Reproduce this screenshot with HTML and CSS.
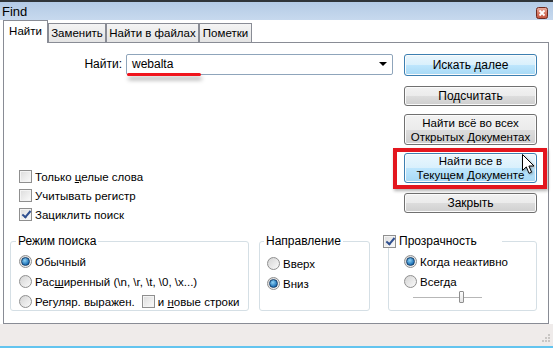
FILE: index.html
```html
<!DOCTYPE html>
<html lang="ru">

<head>
    <meta charset="UTF-8">
    <title>Find</title>
    <link rel="stylesheet" href="styles.css">
</head>

<body>

    <div class="window">
        <div class="titlebar">
            <span class="title">Find</span>
            <svg class="close" width="12" height="12" viewBox="0 0 12 12">
                <defs>
                    <linearGradient id="closeFill" x1="0" y1="0" x2="0" y2="1">
                        <stop offset="0" stop-color="#eab0a4"/>
                        <stop offset="0.5" stop-color="#d77a66"/>
                        <stop offset="1" stop-color="#c2503c"/>
                    </linearGradient>
                </defs>
                <rect x="0.5" y="0.5" width="11" height="11" rx="2" fill="url(#closeFill)" stroke="#6e2a20"/>
                <path d="M3.5 3.5 L8.5 8.5 M8.5 3.5 L3.5 8.5" stroke="#fff" stroke-width="1.8"/>
            </svg>
        </div>

        <div class="tabs">
            <div class="tab active">Найти</div>
            <div class="tab tab-replace">Заменить</div>
            <div class="tab tab-files">Найти в файлах</div>
            <div class="tab tab-marks">Пометки</div>
        </div>

        <div class="panel">
            <div class="top">
                <div class="left">
                    <div class="find-row">
                        <label class="find-label">Найти:</label>
                        <div class="combo">
                            <span class="combo-value">webalta</span>
                            <span class="combo-arrow"></span>
                            <span class="mark-line"></span>
                        </div>
                    </div>

                    <div class="checks">
                        <div class="check"><span class="box"></span><span>Только <u>ц</u>елые слова</span></div>
                        <div class="check"><span class="box"></span><span>Учитывать регистр</span></div>
                        <div class="check"><span class="box checked"></span><span>Зациклить поиск</span></div>
                    </div>
                </div>

                <div class="buttons">
                    <div class="btn blue btn-next">Искать далее</div>
                    <div class="btn btn-count"><span>По<u>д</u>считать</span></div>
                    <div class="btn tall btn-all-docs"><span>Найти всё во всех<br>Открытых Документах</span></div>
                    <div class="btn-wrap">
                        <div class="btn blue tall"><span>Найти все в<br>Текущем Документе</span></div>
                        <span class="mark-frame"></span>
                        <svg class="cursor" width="14" height="22" viewBox="0 0 14 22">
                            <path d="M0.5 0.5 L0.5 16.5 L4.3 12.9 L7 19.3 L9.6 18.2 L6.9 12 L12 12 Z" fill="#fff" stroke="#000" stroke-width="1" stroke-linejoin="round"/>
                        </svg>
                    </div>
                    <div class="btn btn-close">Закрыть</div>
                </div>
            </div>

            <div class="groups">
                <fieldset class="group group-mode">
                    <legend>Режим поиска</legend>
                    <div class="radio-row first"><span class="radio on"></span><span>Обычный</span></div>
                    <div class="radio-row"><span class="radio"></span><span>Рас<u>ш</u>иренный (\n, \r, \t, \0, \x...)</span></div>
                    <div class="radio-row">
                        <span class="radio"></span><span>Регуляр. выражен.</span>
                        <span class="box inline-box"></span><span>и <u>н</u>овые строки</span>
                    </div>
                </fieldset>

                <fieldset class="group group-dir">
                    <legend>Направление</legend>
                    <div class="radio-row first"><span class="radio"></span><span>Вверх</span></div>
                    <div class="radio-row"><span class="radio on"></span><span>Вниз</span></div>
                </fieldset>

                <fieldset class="group group-trans">
                    <legend><span class="box checked"></span><span>Прозрачность</span></legend>
                    <div class="radio-row first"><span class="radio on"></span><span>Когда неактивно</span></div>
                    <div class="radio-row"><span class="radio"></span><span>Всегда</span></div>
                    <div class="slider"><span class="thumb"></span></div>
                </fieldset>
            </div>
        </div>

        <div class="footer">
            <svg class="grip" width="11" height="11" viewBox="0 0 11 11">
                <g fill="#c9c6c4">
                    <rect x="8" y="0" width="2" height="2"/>
                    <rect x="5" y="3" width="2" height="2"/>
                    <rect x="8" y="3" width="2" height="2"/>
                    <rect x="2" y="6" width="2" height="2"/>
                    <rect x="5" y="6" width="2" height="2"/>
                    <rect x="8" y="6" width="2" height="2"/>
                </g>
            </svg>
        </div>
    </div>

</body>

</html>
```

FILE: styles.css
```css
* {
    box-sizing: border-box;
}

body {
    margin: 0;
    font-family: "Liberation Sans", Arial, sans-serif;
    font-size: 11.5px;
    color: #000;
    background-color: #ffffff;
}

.window {
    width: 553px;
    height: 348px;
    display: flex;
    flex-direction: column;
    background-color: #ffffff;
    overflow: hidden;
}

/* title bar */

.titlebar {
    height: 20px;
    border-top: 2px solid #30353a;
    background: linear-gradient(#b4cbe6, #c7d9ee);
    display: flex;
    align-items: center;
    justify-content: space-between;
    padding: 0 5px 0 2px;
}

.title {
    font-size: 13px;
}

.close {
    margin-top: 4px;
}

/* tabs */

.tabs {
    height: 22px;
    display: flex;
    align-items: flex-end;
    padding-left: 3px;
    font-size: 11.5px;
}

.tab {
    height: 19px;
    border: 1px solid #898c95;
    border-bottom: none;
    background: linear-gradient(#f4f4f4, #e4e4e4);
    display: flex;
    align-items: center;
    justify-content: center;
}

.tab.active {
    width: 45px;
    height: 23px;
    margin-bottom: -1px;
    background: #ffffff;
    position: relative;
    z-index: 1;
    padding-bottom: 2px;
}

.tab-replace {
    width: 58px;
}

.tab-files {
    width: 93px;
}

.tab-marks {
    width: 53px;
}

/* panel */

.panel {
    height: 282px;
    margin: 0 4px 0 3px;
    border: 1px solid #898c95;
    background-color: #ffffff;
}

.top {
    height: 191px;
    display: flex;
}

.left {
    width: 390px;
    padding-top: 10px;
}

.find-row {
    display: flex;
    align-items: center;
    height: 22px;
}

.find-label {
    width: 118px;
    margin-right: 4px;
    text-align: right;
    font-size: 12px;
}

.combo {
    position: relative;
    width: 267px;
    height: 21px;
    border: 1px solid #8fa5bb;
    border-radius: 2px;
    display: flex;
    align-items: center;
    justify-content: space-between;
    padding: 0 5px 0 5px;
}

.combo-value {
    font-size: 12px;
}

.combo-arrow {
    width: 0;
    height: 0;
    border-left: 4px solid transparent;
    border-right: 4px solid transparent;
    border-top: 4px solid #000;
}

.mark-line {
    position: absolute;
    left: 0;
    top: 18px;
    width: 74px;
    height: 3px;
    border-radius: 2px;
    background-color: #f0141c;
    box-shadow: 1px 4px 4px rgba(0, 0, 0, 0.35);
}

.checks {
    margin-top: 95px;
    padding-left: 15px;
}

.check {
    display: flex;
    align-items: center;
    height: 13px;
    margin-bottom: 6px;
}

/* checkbox */

.box {
    width: 13px;
    height: 13px;
    border: 1px solid #8f8f8f;
    background: linear-gradient(135deg, #dcdcdc, #fbfbfb);
    box-shadow: inset 0 0 0 1px #f4f4f4;
    margin-right: 3px;
    flex-shrink: 0;
    position: relative;
}

.box.checked::after {
    content: "";
    position: absolute;
    left: 4px;
    top: 0px;
    width: 3px;
    height: 7px;
    border-right: 2px solid #2f4f8f;
    border-bottom: 2px solid #2f4f8f;
    transform: rotate(40deg);
}

/* buttons */

.buttons {
    width: 133px;
    margin-left: 10px;
    padding-top: 11px;
    display: flex;
    flex-direction: column;
}

.btn {
    height: 21px;
    border: 1px solid #707070;
    border-radius: 3px;
    background: linear-gradient(#f2f2f2 0%, #ebebeb 50%, #dddddd 50%, #cfcfcf 100%);
    box-shadow: inset 0 0 0 1px #fbfbfb;
    display: flex;
    align-items: center;
    justify-content: center;
    text-align: center;
    line-height: 14px;
    font-size: 12px;
}

.btn.blue {
    border-color: #3c7fb1;
    background: linear-gradient(#eaf6fd 0%, #d9f0fc 50%, #bee6fd 50%, #a7d9f5 100%);
}

.btn.tall {
    height: 31px;
    font-size: 11.5px;
}

.btn-next {
    height: 22px;
}

.btn-count {
    margin-top: 10px;
    height: 20px;
}

.btn-all-docs {
    margin-top: 8px;
}

.btn-wrap {
    position: relative;
    margin-top: 8px;
}

.btn-wrap .btn {
    height: 30px;
}

.mark-frame {
    position: absolute;
    left: -11px;
    right: -10px;
    top: -5px;
    bottom: -6px;
    border: 4px solid #e3161e;
    box-shadow: 1px 2px 3px rgba(0, 0, 0, 0.3);
}

.cursor {
    position: absolute;
    left: 118px;
    top: 1px;
    filter: drop-shadow(1px 1px 1px rgba(0, 0, 0, 0.3));
}

.btn-close {
    margin-top: 10px;
    height: 20px;
}

/* group boxes */

.groups {
    display: flex;
    padding-left: 6px;
}

.group {
    margin: 0;
    height: 77px;
    border: 1px solid #d5dfe5;
    border-radius: 3px;
    padding: 0;
}

.group legend {
    line-height: 14px;
    padding: 0 2px;
    margin-left: -3px;
    font-size: 12px;
}

.group-mode {
    width: 239px;
    padding-left: 8px;
}

.group-dir {
    width: 111px;
    margin-left: 10px;
    padding-left: 7px;
}

.group-trans {
    width: 149px;
    margin-left: 18px;
    padding-left: 15px;
}

.group-trans legend {
    width: 119px;
    margin-left: -21px;
    padding: 0;
    display: flex;
    align-items: center;
}

.radio-row {
    display: flex;
    align-items: center;
    height: 13px;
    margin-top: 7px;
    white-space: nowrap;
}

.radio-row.first {
    margin-top: 7px;
}

.group-dir .radio-row.first {
    margin-top: 9px;
}

.radio {
    width: 13px;
    height: 13px;
    border-radius: 50%;
    border: 1px solid #8f8f8f;
    background: linear-gradient(135deg, #d4d4d4, #fafafa);
    margin-right: 3px;
    flex-shrink: 0;
    display: flex;
    align-items: center;
    justify-content: center;
}

.radio.on::after {
    content: "";
    width: 7px;
    height: 7px;
    border-radius: 50%;
    background: radial-gradient(circle at 40% 35%, #8fd3f6, #1b6fb5 70%, #0e4a83);
    border: 1px solid #17406b;
}

.inline-box {
    margin-left: 7px;
}

.slider {
    position: relative;
    width: 69px;
    height: 2px;
    margin: 9px 0 0 9px;
    border-top: 1px solid #b7b7b7;
    border-bottom: 1px solid #ffffff;
}

.thumb {
    position: absolute;
    left: 46px;
    top: -7px;
    width: 5px;
    height: 12px;
    border: 1px solid #8f8f8f;
    border-radius: 1px;
    background: linear-gradient(#fdfdfd, #e4e4e4);
}

/* footer */

.footer {
    flex: 1;
    background-color: #efebea;
    border-bottom: 2px solid #63c4ef;
    display: flex;
    justify-content: flex-end;
    align-items: flex-end;
    padding: 0 2px 1px 0;
}
```
